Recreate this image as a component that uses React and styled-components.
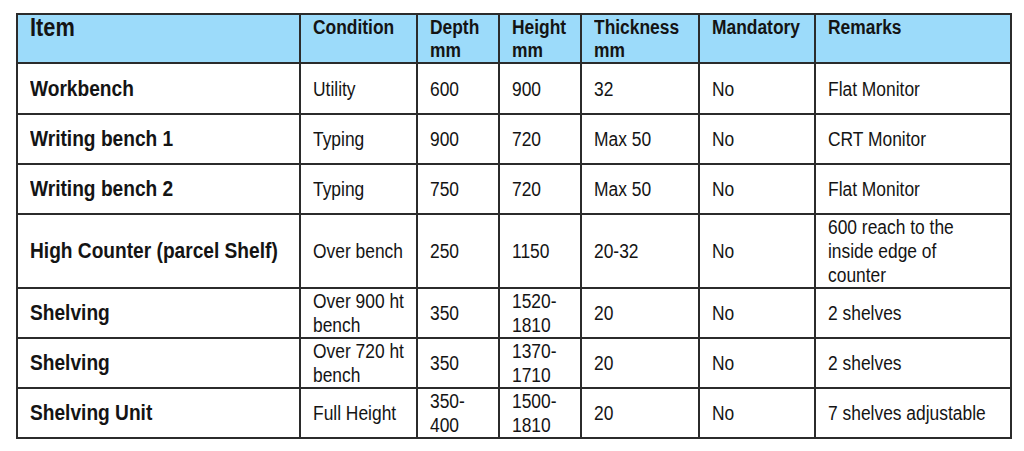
import React from "react";
import styled, { createGlobalStyle } from "styled-components";

const Global = createGlobalStyle`
  html, body { margin: 0; padding: 0; background: #ffffff; }
  body { font-family: "Liberation Sans", Arial, sans-serif; color: #141414; }
`;

const Page = styled.div`
  padding: 13px 0 0 16px;
`;

const Table = styled.table`
  border-collapse: collapse;
  table-layout: fixed;
  width: 994px;
  border: 2px solid #2b2b2b;
`;

const HeadRow = styled.tr`
  height: 49px;
  background: #9cdbfa;
`;

const Row = styled.tr`
  height: ${(p) => p.$h || 50}px;
`;

const HeadCell = styled.th`
  border: 2px solid #2b2b2b;
  text-align: left;
  vertical-align: top;
  padding: 1px 0 0 12px;
  font-weight: 700;
  font-size: ${(p) => (p.$big ? 25 : 20)}px;
  line-height: 23px;
  overflow: hidden;
`;

const Cell = styled.td`
  border: 2px solid #2b2b2b;
  vertical-align: middle;
  padding: 0 0 0 12px;
  font-weight: ${(p) => (p.$bold ? 700 : 400)};
  font-size: ${(p) => (p.$bold ? 22 : 20)}px;
  line-height: 24px;
  overflow: hidden;
`;

const Narrow = styled.span`
  display: inline-block;
  white-space: nowrap;
  transform: scaleX(0.87);
  transform-origin: left center;
`;

const cols = [283, 117, 82, 82, 118, 116, 196];

const rows = [
  { h: 51, c: ["Workbench", "Utility", "600", "900", "32", "No", "Flat Monitor"] },
  { h: 50, c: ["Writing bench 1", "Typing", "900", "720", "Max 50", "No", "CRT Monitor"] },
  { h: 50, c: ["Writing bench 2", "Typing", "750", "720", "Max 50", "No", "Flat Monitor"] },
  { h: 74, c: ["High Counter (parcel Shelf)", "Over bench", "250", "1150", "20-32", "No", ["600 reach to the", "inside edge of", "counter"]] },
  { h: 50, c: ["Shelving", ["Over 900 ht", "bench"], "350", ["1520-", "1810"], "20", "No", "2 shelves"] },
  { h: 49, c: ["Shelving", ["Over 720 ht", "bench"], "350", ["1370-", "1710"], "20", "No", "2 shelves"] },
  { h: 50, c: ["Shelving Unit", "Full Height", ["350-", "400"], ["1500-", "1810"], "20", "No", "7 shelves adjustable"] },
];

const lines = (v) =>
  (Array.isArray(v) ? v : [v]).map((t, i) => (
    <React.Fragment key={i}>
      {i > 0 && <br />}
      <Narrow>{t}</Narrow>
    </React.Fragment>
  ));

const heads = ["Item", "Condition", ["Depth", "mm"], ["Height", "mm"], ["Thickness", "mm"], "Mandatory", "Remarks"];

export default function App() {
  return (
    <>
      <Global />
      <Page>
        <Table>
          <colgroup>
            {cols.map((w, i) => (
              <col key={i} style={{ width: w }} />
            ))}
          </colgroup>
          <thead>
            <HeadRow>
              {heads.map((h, i) => (
                <HeadCell key={i} $big={i === 0}>
                  {lines(h)}
                </HeadCell>
              ))}
            </HeadRow>
          </thead>
          <tbody>
            {rows.map((r, i) => (
              <Row key={i} $h={r.h}>
                {r.c.map((v, j) => (
                  <Cell key={j} $bold={j === 0}>
                    {lines(v)}
                  </Cell>
                ))}
              </Row>
            ))}
          </tbody>
        </Table>
      </Page>
    </>
  );
}
